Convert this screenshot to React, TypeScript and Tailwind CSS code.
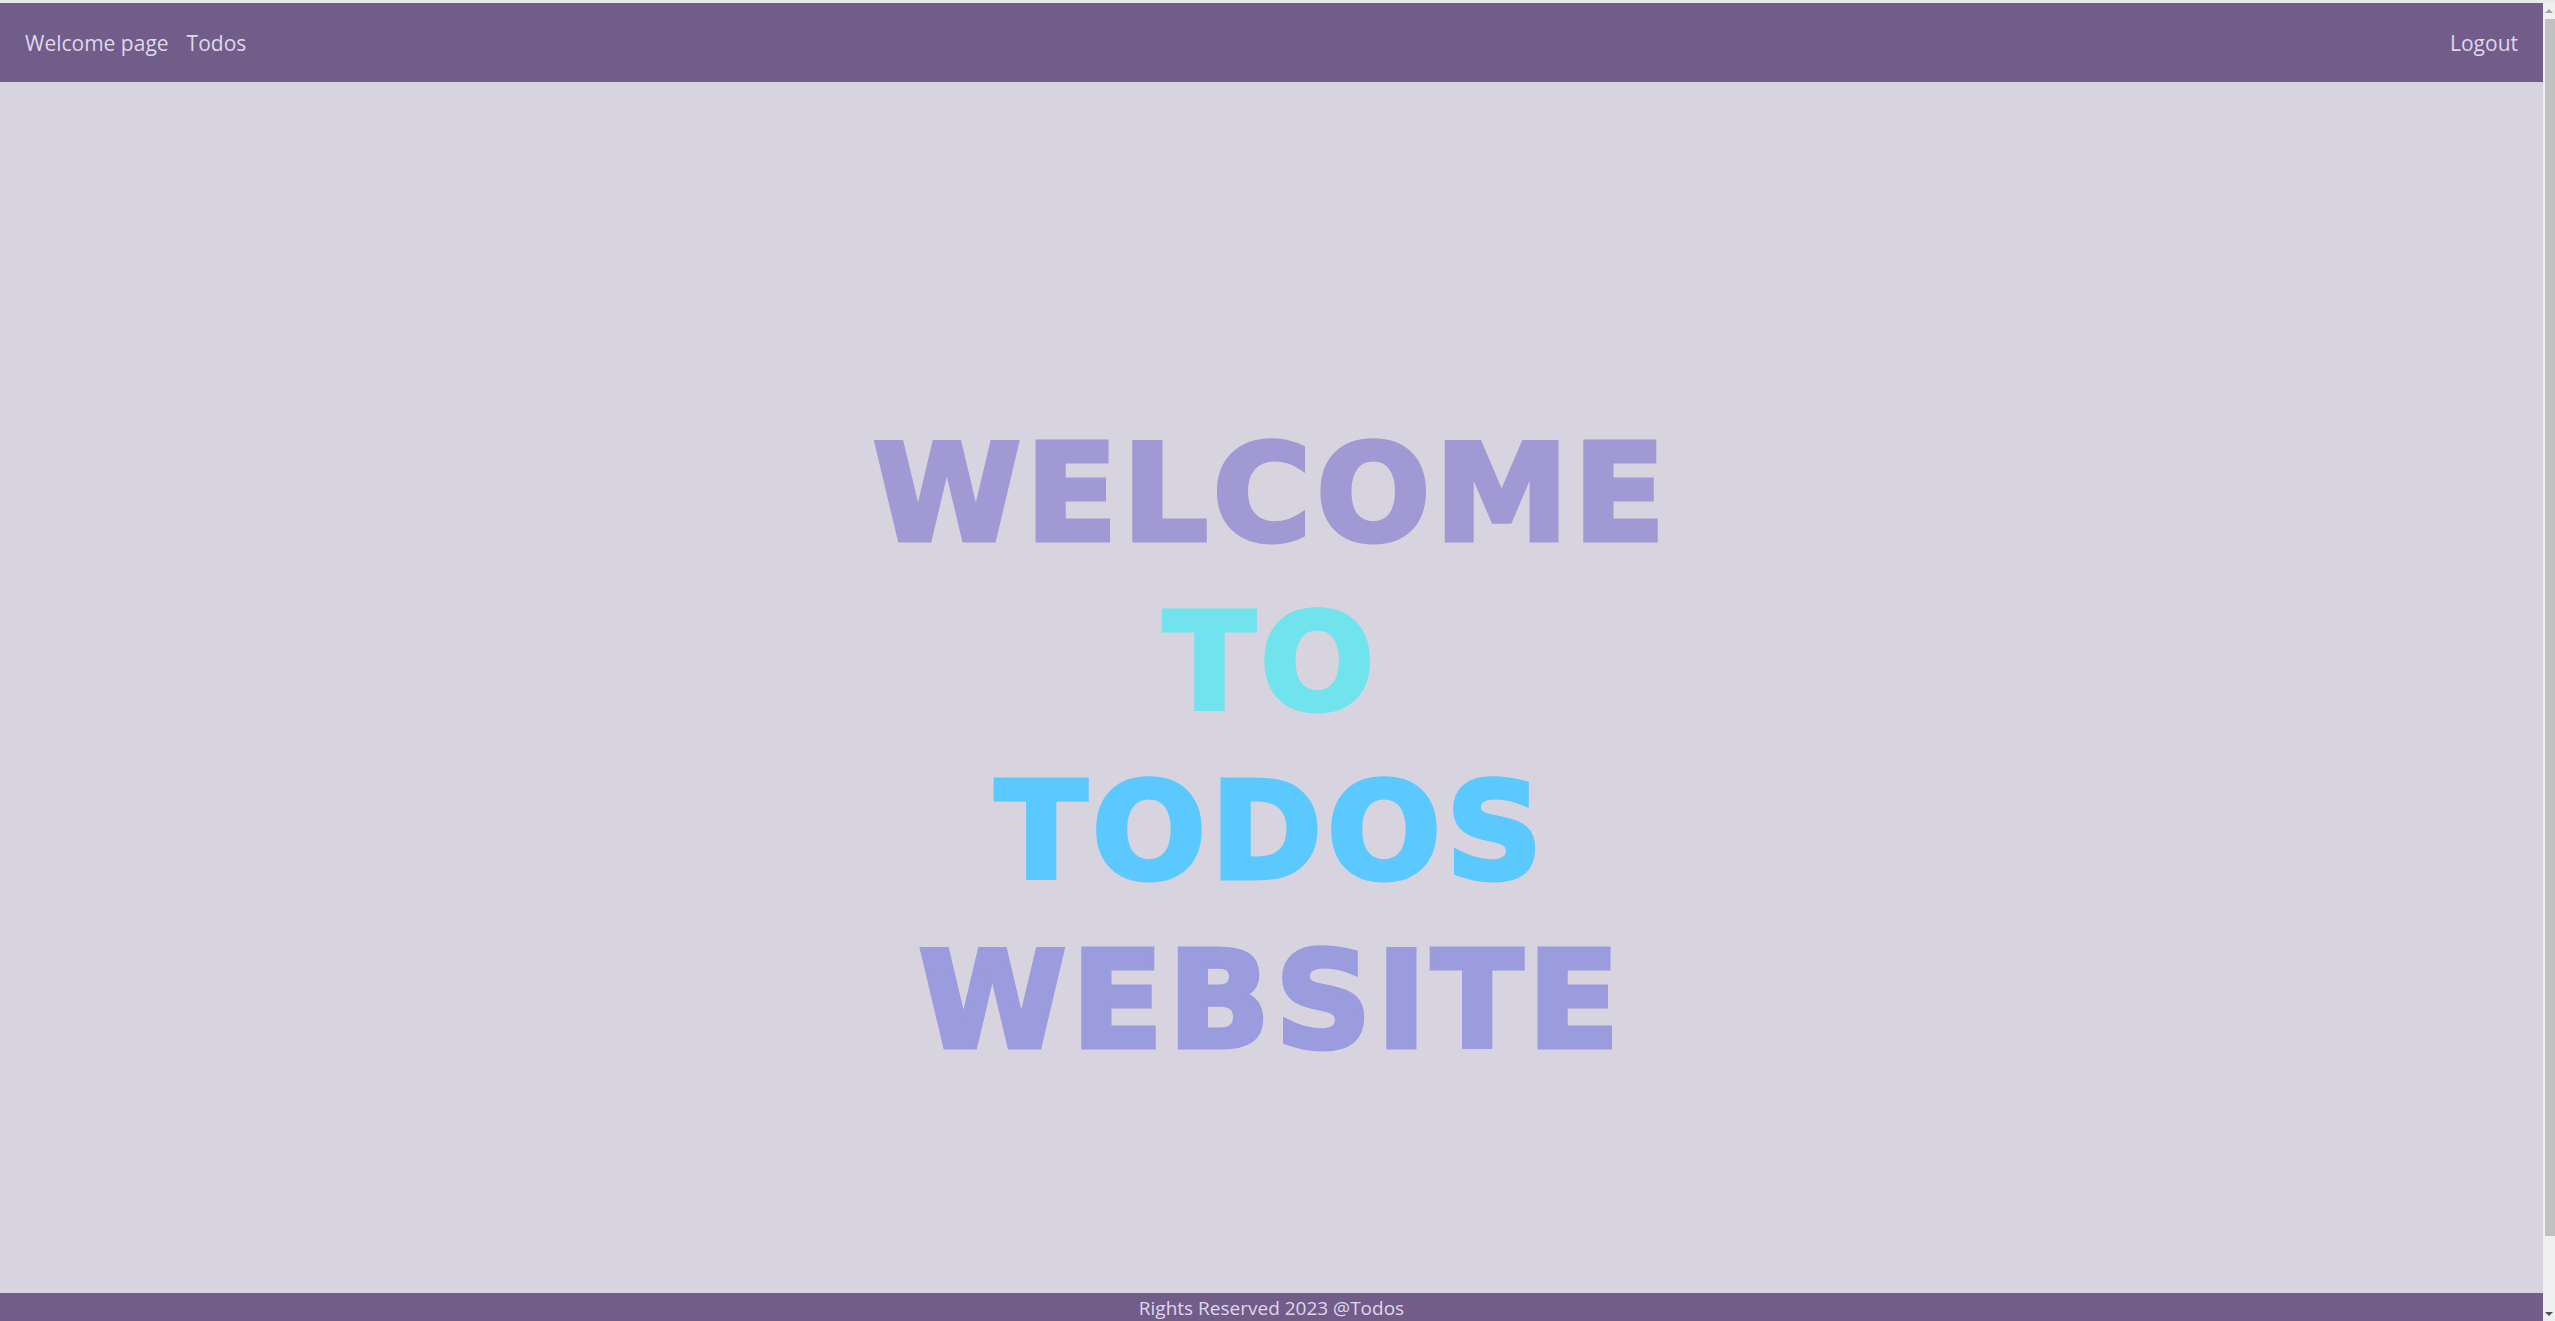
import React from "react";

const navLink = "text-[#ddd8ea] hover:text-white";

const Scrollbar: React.FC = () => (
  <div className="w-[12px] bg-[#f0f0f0] flex flex-col items-center">
    <div className="h-[16px] flex items-center justify-center">
      <div className="w-0 h-0 border-l-[4px] border-r-[4px] border-b-[4px] border-l-transparent border-r-transparent border-b-[#a3a3a3]" />
    </div>
    <div className="ml-[2px] w-[10px] h-[1217px] bg-[#c1c1c1]" />
    <div className="flex-1" />
    <div className="h-[14px] flex items-center justify-center">
      <div className="w-0 h-0 border-l-[4px] border-r-[4px] border-t-[4px] border-l-transparent border-r-transparent border-t-[#505050]" />
    </div>
  </div>
);

const App: React.FC = () => {
  return (
    <div className="h-screen w-full flex flex-col overflow-hidden bg-[#e9e9ec] font-['Open_Sans',sans-serif]">
      <div className="h-[3px] bg-[#e9e9ec]" />
      <div className="flex flex-1 min-h-0">
        <div className="flex-1 flex flex-col bg-[#d8d4df]">
          {/* Navbar */}
          <nav className="h-[79px] bg-[#725c8a] flex items-center justify-between pt-[2px] pl-[25px] pr-[25px] text-[21px]">
            <ul className="flex items-center gap-[18px]">
              <li><a href="#" className={navLink}>Welcome page</a></li>
              <li><a href="#" className={navLink}>Todos</a></li>
            </ul>
            <a href="#" className={navLink}>Logout</a>
          </nav>

          {/* Welcome */}
          <main className="flex-1 flex flex-col items-center justify-center pt-[120px]">
            <h1 className="flex flex-col items-center font-['DejaVu_Sans',sans-serif] font-bold text-[134px] leading-[169px] tracking-[5px] [-webkit-text-stroke:5px]">
              <span className="text-[#a099d4]">WELCOME</span>
              <span className="text-[#70e3ec]">TO</span>
              <span className="text-[#5bc9fd]">TODOS</span>
              <span className="text-[#9a9cdd]">WEBSITE</span>
            </h1>
          </main>

          {/* Footer */}
          <footer className="h-[28px] bg-[#725c8a] overflow-hidden text-center text-[19px] leading-[28px] pt-[1px] text-[#ddd8ea]">
            Rights Reserved 2023 @Todos
          </footer>
        </div>
        <Scrollbar />
      </div>
    </div>
  );
};

export default App;
